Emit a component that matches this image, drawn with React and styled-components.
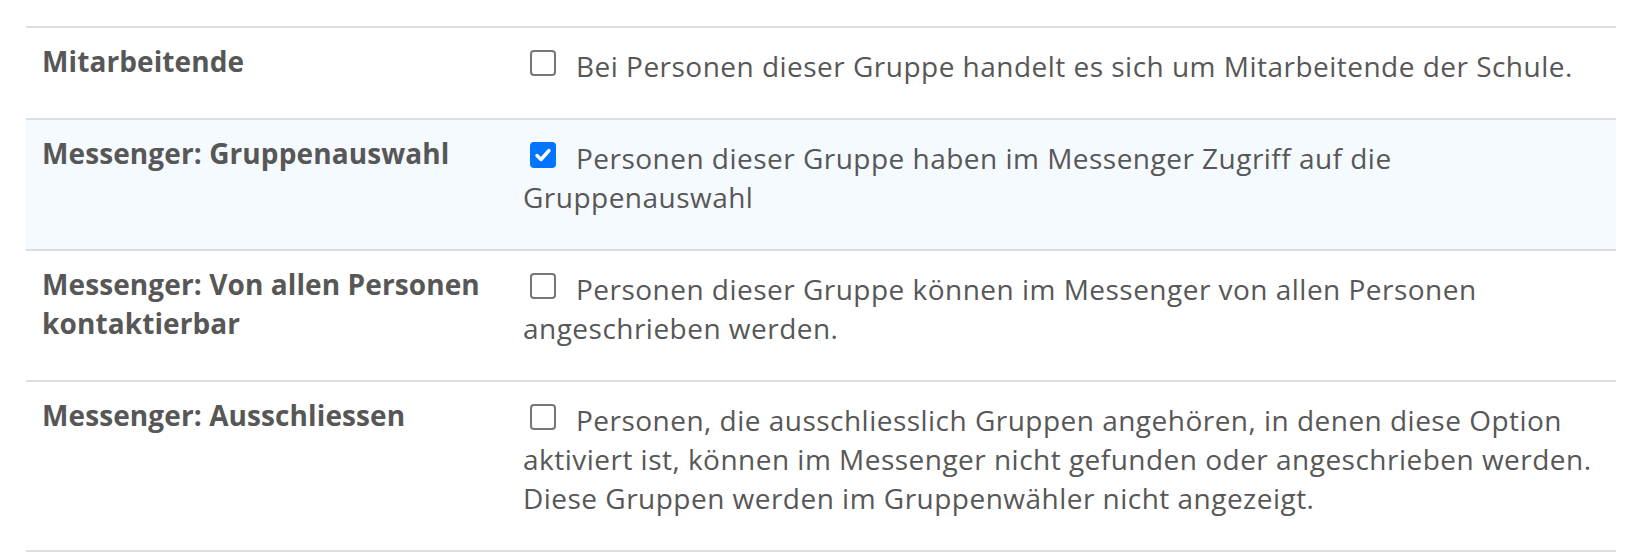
import styled, { createGlobalStyle } from "styled-components";

const Global = createGlobalStyle`
  body {
    margin: 0;
    background: #ffffff;
    font-family: "Open Sans", "Liberation Sans", sans-serif;
    color: #575757;
  }
`;

const Page = styled.main`
  padding: 26px 24px 0 26px;
`;

const Table = styled.div`
  border-bottom: 2px solid #dddddd;
`;

const Row = styled.div`
  display: grid;
  grid-template-columns: 481px 1fr;
  border-top: 2px solid #dddddd;
  background: ${({ $active }) => ($active ? "#f5faff" : "#ffffff")};
`;

const Label = styled.div`
  padding: 14px 16px 31px 16px;
  font-size: 28px;
  line-height: 39px;
  font-weight: 700;
  letter-spacing: 0.1px;
`;

const Desc = styled.label`
  display: block;
  padding: 19px 16px 32px 16px;
  font-size: 28px;
  line-height: 39px;
  font-weight: 400;
  letter-spacing: 0.48px;
`;

const Box = styled.span`
  display: inline-flex;
  align-items: center;
  justify-content: center;
  box-sizing: border-box;
  width: 26px;
  height: 26px;
  margin: 3px 20px 0 7px;
  vertical-align: top;
  border-radius: 4px;
  border: 2px solid ${({ $checked }) => ($checked ? "#0075ff" : "#767676")};
  background: ${({ $checked }) => ($checked ? "#0075ff" : "#ffffff")};
`;

function Checkbox({ checked }) {
  return (
    <Box $checked={checked}>
      {checked && (
        <svg width="20" height="20" viewBox="0 0 20 20">
          <path
            d="M4 10.5 L8 14.5 L16 5.5"
            fill="none"
            stroke="#ffffff"
            strokeWidth="3.4"
            strokeLinecap="round"
            strokeLinejoin="round"
          />
        </svg>
      )}
    </Box>
  );
}

const rows = [
  {
    label: "Mitarbeitende",
    text: "Bei Personen dieser Gruppe handelt es sich um Mitarbeitende der Schule.",
    checked: false,
  },
  {
    label: "Messenger: Gruppenauswahl",
    text: "Personen dieser Gruppe haben im Messenger Zugriff auf die Gruppenauswahl",
    checked: true,
    active: true,
  },
  {
    label: "Messenger: Von allen Personen kontaktierbar",
    text: "Personen dieser Gruppe können im Messenger von allen Personen angeschrieben werden.",
    checked: false,
  },
  {
    label: "Messenger: Ausschliessen",
    text: "Personen, die ausschliesslich Gruppen angehören, in denen diese Option aktiviert ist, können im Messenger nicht gefunden oder angeschrieben werden. Diese Gruppen werden im Gruppenwähler nicht angezeigt.",
    checked: false,
  },
];

export default function App() {
  return (
    <Page>
      <Global />
      <Table>
        {rows.map((r) => (
          <Row key={r.label} $active={r.active}>
            <Label>{r.label}</Label>
            <Desc>
              <Checkbox checked={r.checked} />
              {r.text}
            </Desc>
          </Row>
        ))}
      </Table>
    </Page>
  );
}
